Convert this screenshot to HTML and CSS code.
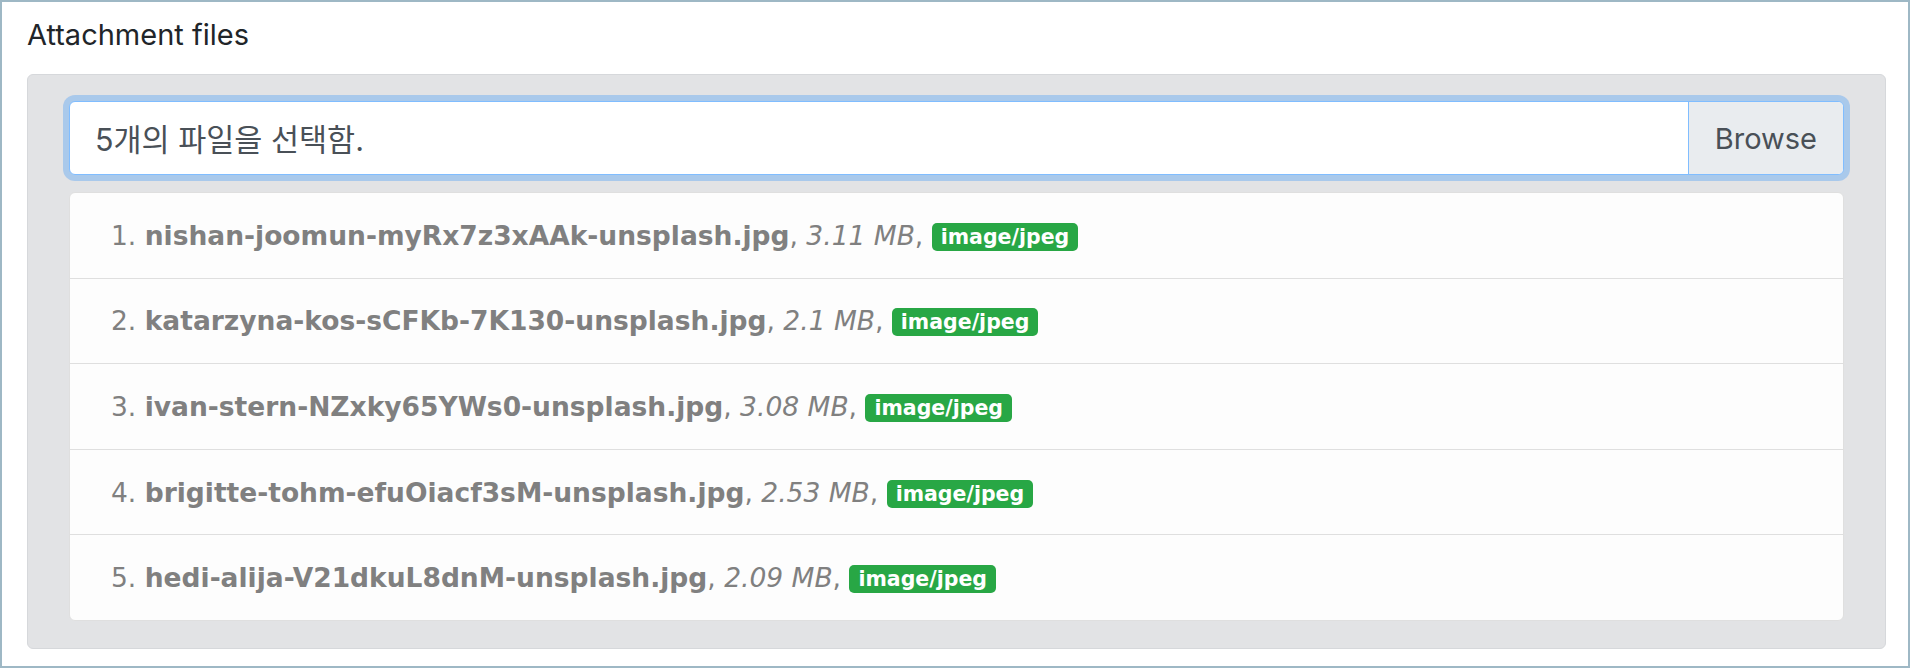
FILE: index.html
```html
<!DOCTYPE html>
<html lang="ko">
<head>
<meta charset="utf-8">
<title>Attachment files</title>
<link rel="stylesheet" href="styles.css">
</head>
<body>
<div class="frame">
  <div class="title">Attachment files</div>
  <div class="card">
    <div class="input-group">
      <div class="file-label">5개의 파일을 선택함.</div>
      <div class="browse">Browse</div>
    </div>
    <ul class="file-list">
      <li class="file-item"><span class="num">1.</span> <b>nishan-joomun-myRx7z3xAAk-unsplash.jpg</b>, <i>3.11 MB</i>, <span class="badge">image/jpeg</span></li>
      <li class="file-item"><span class="num">2.</span> <b>katarzyna-kos-sCFKb-7K130-unsplash.jpg</b>, <i>2.1 MB</i>, <span class="badge">image/jpeg</span></li>
      <li class="file-item"><span class="num">3.</span> <b>ivan-stern-NZxky65YWs0-unsplash.jpg</b>, <i>3.08 MB</i>, <span class="badge">image/jpeg</span></li>
      <li class="file-item"><span class="num">4.</span> <b>brigitte-tohm-efuOiacf3sM-unsplash.jpg</b>, <i>2.53 MB</i>, <span class="badge">image/jpeg</span></li>
      <li class="file-item"><span class="num">5.</span> <b>hedi-alija-V21dkuL8dnM-unsplash.jpg</b>, <i>2.09 MB</i>, <span class="badge">image/jpeg</span></li>
    </ul>
  </div>
</div>
</body>
</html>
```
FILE: styles.css
```css
* { box-sizing: border-box; }
html, body { margin: 0; padding: 0; background: #fff; }
.frame {
  width: 1910px;
  height: 668px;
  border: 2px solid #9eb8c5;
  padding: 13px 22px 0 25px;
  background: #fff;
}
.title {
  font-family: Inter, "Liberation Sans", sans-serif;
  font-size: 29px;
  line-height: 40px;
  color: #212529;
  margin-bottom: 19px;
}
.card {
  background: #e2e3e5;
  border: 1px solid #d6d8db;
  border-radius: 6px;
  padding: 26px 41px 27px 41px;
}
.input-group {
  display: flex;
  height: 74px;
  border: 1px solid #80bdff;
  border-radius: 6px;
  box-shadow: 0 0 0 6px rgba(0, 123, 255, .25);
  overflow: hidden;
  background: #fff;
  font-family: Inter, "Noto Sans CJK KR", sans-serif;
  font-size: 29px;
  color: #495057;
}
.file-label {
  flex: 1;
  display: flex;
  align-items: center;
  padding-left: 25px;
  font-size: 30.5px;
}
.browse {
  display: flex;
  align-items: center;
  padding: 0 26px;
  background: #e9ecef;
  border-left: 1px solid #80bdff;
}
.file-list {
  list-style: none;
  margin: 17px 0 0 0;
  padding: 0;
  background: #fdfdfd;
  border: 1px solid #dfdfdf;
  border-radius: 6px;
}
.file-item {
  font-family: "DejaVu Sans", Verdana, sans-serif;
  font-size: 26.5px;
  line-height: 39px;
  color: #808080;
  padding: 22.8px 41px;
  border-top: 1px solid #dfdfdf;
}
.file-item:first-child { border-top: none; }
.file-item b { font-weight: bold; }
.file-item i { font-style: italic; }
.badge {
  display: inline-block;
  background: #28a745;
  color: #fff;
  font-weight: bold;
  font-size: 20.5px;
  line-height: 20px;
  padding: 4px 9px;
  border-radius: 5px;
  vertical-align: 1px;
}
```
